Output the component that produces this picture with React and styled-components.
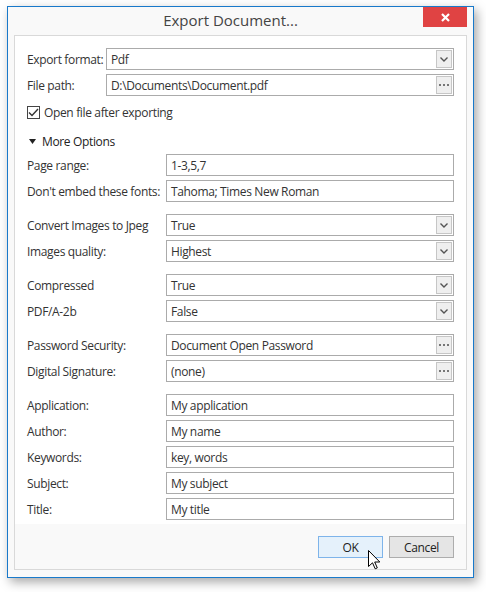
import React from 'react'
import styled, { createGlobalStyle } from 'styled-components'

const GlobalStyle = createGlobalStyle`
  html, body {
    margin: 0;
    padding: 0;
    background: #fff;
  }
  body {
    font-family: "Open Sans", "Noto Sans", sans-serif;
    font-size: 12px;
    letter-spacing: -0.35px;
    color: #333;
  }
`

const Page = styled.div`
  width: 486px;
  height: 592px;
  box-sizing: border-box;
  padding: 6px 0 0 7px;
`

const Window = styled.div`
  width: 467px;
  height: 572px;
  box-sizing: border-box;
  border: 1px solid #1979ca;
  background: #f9f9f9;
  box-shadow: 3px 4px 10px rgba(0, 0, 0, 0.35);
  display: flex;
  flex-direction: column;
`

const TitleBar = styled.div`
  height: 28px;
  display: flex;
  align-items: flex-start;
`

const Title = styled.div`
  flex: 1;
  padding-left: 30px;
  height: 28px;
  line-height: 27px;
  text-align: center;
  font-size: 15px;
  letter-spacing: 0;
  color: #444;
`

const CloseButton = styled.div`
  width: 44px;
  height: 20px;
  margin-right: 6px;
  background: #e04343;
  display: flex;
  align-items: center;
  justify-content: center;
`

const Panel = styled.div`
  flex: 1;
  margin: 0 6px 7px 6px;
  border: 1px solid #d9d9d9;
  background: #fff;
  display: flex;
  flex-direction: column;
`

const Content = styled.div`
  flex: 1;
  padding: 12px 12px 4px 12px;
  display: flex;
  flex-direction: column;
`

const FieldGrid = styled.div`
  display: grid;
  grid-template-columns: ${p => p.labelWidth}px 1fr;
  grid-auto-rows: 22px;
  row-gap: 4px;
  margin-top: ${p => p.top || 0}px;
`

const Label = styled.div`
  display: flex;
  align-items: center;
  white-space: nowrap;
  color: #333;
`

const Box = styled.div`
  display: flex;
  align-items: center;
  box-sizing: border-box;
  height: 22px;
  padding-left: 4px;
  border: 1px solid #ababab;
  background: #fff;
  color: #333;
  white-space: nowrap;
`

const BoxText = styled.span`
  flex: 1;
`

const EditButton = styled.div`
  width: 16px;
  height: 18px;
  margin-right: 1px;
  box-sizing: border-box;
  border: 1px solid #c6c6c6;
  background: #efefef;
  display: flex;
  align-items: center;
  justify-content: center;
`

const CheckRow = styled.div`
  display: flex;
  align-items: center;
  height: 20px;
  margin-top: 6px;
  gap: 4px;
`

const CheckBox = styled.div`
  width: 13px;
  height: 13px;
  box-sizing: border-box;
  border: 1px solid #444;
  background: #fff;
  display: flex;
  align-items: center;
  justify-content: center;
`

const Expander = styled.div`
  display: flex;
  align-items: center;
  height: 20px;
  margin-top: 9px;
  padding-left: 2px;
  gap: 6px;
  color: #222;
`

const Footer = styled.div`
  position: relative;
  display: flex;
  justify-content: flex-end;
  gap: 6px;
  padding: 12px 12px 11px 12px;
  background: #f9f9f9;
`

const Button = styled.div`
  width: 65px;
  height: 22px;
  box-sizing: border-box;
  display: flex;
  align-items: center;
  justify-content: center;
  border: 1px solid ${p => (p.hot ? '#7eb4ea' : '#adadad')};
  background: ${p => (p.hot ? '#e5f1fb' : '#e5e5e5')};
  color: #222;
`

const Cursor = styled.svg`
  position: absolute;
  left: 353px;
  top: 26px;
`

const Chevron = () => (
  <svg width="8" height="5" viewBox="0 0 8 5">
    <path d="M0.5 0.5 L4 4 L7.5 0.5" fill="none" stroke="#555" strokeWidth="1.4" />
  </svg>
)

const Dots = () => (
  <svg width="10" height="2" viewBox="0 0 10 2">
    <rect x="0" y="0" width="2" height="2" fill="#777" />
    <rect x="4" y="0" width="2" height="2" fill="#777" />
    <rect x="8" y="0" width="2" height="2" fill="#777" />
  </svg>
)

const Field = ({ label, value, kind }) => (
  <>
    <Label>{label}</Label>
    <Box>
      <BoxText>{value}</BoxText>
      {kind === 'combo' && <EditButton><Chevron /></EditButton>}
      {kind === 'dots' && <EditButton><Dots /></EditButton>}
    </Box>
  </>
)

const groups = [
  [
    ['Page range:', '1-3,5,7'],
    ["Don't embed these fonts:", 'Tahoma; Times New Roman'],
  ],
  [
    ['Convert Images to Jpeg', 'True', 'combo'],
    ['Images quality:', 'Highest', 'combo'],
  ],
  [
    ['Compressed', 'True', 'combo'],
    ['PDF/A-2b', 'False', 'combo'],
  ],
  [
    ['Password Security:', 'Document Open Password', 'dots'],
    ['Digital Signature:', '(none)', 'dots'],
  ],
  [
    ['Application:', 'My application'],
    ['Author:', 'My name'],
    ['Keywords:', 'key, words'],
    ['Subject:', 'My subject'],
    ['Title:', 'My title'],
  ],
]

export default function App() {
  return (
    <Page>
      <GlobalStyle />
      <Window>
        <TitleBar>
          <Title>Export Document...</Title>
          <CloseButton>
            <svg width="9" height="9" viewBox="0 0 9 9">
              <path d="M1 1 L8 8 M8 1 L1 8" stroke="#fff" strokeWidth="2.2" />
            </svg>
          </CloseButton>
        </TitleBar>
        <Panel>
          <Content>
            <FieldGrid labelWidth={79}>
              <Field label="Export format:" value="Pdf" kind="combo" />
              <Field label="File path:" value="D:\Documents\Document.pdf" kind="dots" />
            </FieldGrid>
            <CheckRow>
              <CheckBox>
                <svg width="11" height="9" viewBox="0 0 11 9">
                  <path d="M1 4.5 L4 7.5 L10 1" fill="none" stroke="#333" strokeWidth="1.4" />
                </svg>
              </CheckBox>
              <span>Open file after exporting</span>
            </CheckRow>
            <Expander>
              <svg width="7" height="5" viewBox="0 0 7 5">
                <path d="M0 0 L7 0 L3.5 5 Z" fill="#222" />
              </svg>
              <span>More Options</span>
            </Expander>
            {groups.map((rows, i) => (
              <FieldGrid key={i} labelWidth={139} top={i === 0 ? 3 : 12}>
                {rows.map(([label, value, kind]) => (
                  <Field key={label} label={label} value={value} kind={kind} />
                ))}
              </FieldGrid>
            ))}
          </Content>
          <Footer>
            <Button hot>OK</Button>
            <Button>Cancel</Button>
            <Cursor width="13" height="20" viewBox="0 0 13 20">
              <path
                d="M0.5 0.5 L0.5 16.5 L4.5 12.8 L7.2 18.8 L9.3 17.9 L6.7 12 L11.8 12 Z"
                fill="#fff"
                stroke="#000"
                strokeWidth="1"
                strokeLinejoin="miter"
              />
            </Cursor>
          </Footer>
        </Panel>
      </Window>
    </Page>
  )
}
